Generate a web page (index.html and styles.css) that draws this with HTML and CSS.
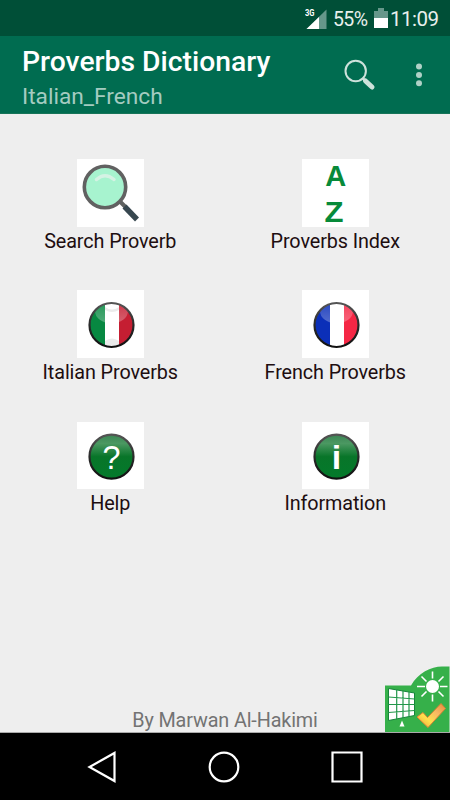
FILE: index.html
```
<!DOCTYPE html>
<html lang="en">
<head>
<meta charset="utf-8">
<title>Proverbs Dictionary</title>
<link rel="stylesheet" href="styles.css">
</head>
<body>
<div class="screen">
  <div class="status">
    <svg class="signal" width="24" height="24" viewBox="0 0 24 24">
      <path d="M21.500 1.500V21H1.500z" fill="#66978a"/>
      <path d="M14 9V21H1.500z" fill="#fff"/>
      <text x="0" y="7.700" class="net" textLength="9.500" lengthAdjust="spacingAndGlyphs">3G</text>
    </svg>
    <span class="percent">55%</span>
    <svg class="battery" width="14" height="20" viewBox="0 0 14 20">
      <path d="M4 0h6v3h4v7H0V3h4z" fill="#66978a"/>
      <path d="M0 10h14v10H0z" fill="#fff"/>
    </svg>
    <span class="clock">11:09</span>
  </div>
  <header class="bar">
    <div class="titles">
      <h1 class="title">Proverbs Dictionary</h1>
      <div class="subtitle">Italian_French</div>
    </div>
    <svg class="find" width="32" height="32" viewBox="0 0 32 32">
      <circle cx="11.700" cy="12" r="10.200" fill="none" stroke="#cde2db" stroke-width="2"/>
      <path d="M18.500 19l3 3" stroke="#cde2db" stroke-width="2.500"/>
      <path d="M21.500 22l6.500 6" stroke="#cde2db" stroke-width="5" stroke-linecap="round"/>
    </svg>
    <svg class="more" width="6" height="24" viewBox="0 0 6 24">
      <g fill="#b0d1c7"><circle cx="3" cy="3.500" r="3"/><circle cx="3" cy="12" r="3"/><circle cx="3" cy="20.300" r="3"/></g>
    </svg>
  </header>
  <main class="content">
    <div class="grid">
      <div class="cell">
        <svg class="tile" viewBox="0 0 67.500 67.500">
          <path d="M41.500 41l7 7" stroke="#606261" stroke-width="4"/>
          <path d="M47.500 47.500l12.500 13" stroke="#37474f" stroke-width="5.500"/>
          <circle cx="28" cy="28" r="20.700" fill="#a7f3cf" stroke="#616161" stroke-width="3.600"/>
          <path d="M19.500 20.500Q28 13 37 20.500" fill="none" stroke="#d5f2e4" stroke-width="3.500" stroke-linecap="round"/>
        </svg>
        <span class="label">Search Proverb</span>
      </div>
      <div class="cell">
        <svg class="tile" viewBox="0 0 67.500 67.500">
          <g class="az"><text x="33.700" y="27" textLength="21" lengthAdjust="spacingAndGlyphs">A</text><text x="32" y="62.700" textLength="19" lengthAdjust="spacingAndGlyphs">Z</text></g>
        </svg>
        <span class="label">Proverbs Index</span>
      </div>
      <div class="cell">
        <svg class="tile" viewBox="0 0 67.500 67.500">
          <defs>
            <clipPath id="disc"><circle cx="34.500" cy="35" r="21.700"/></clipPath>
            <linearGradient id="gloss" x1="0" y1="0" x2="0" y2="1"><stop offset="0" stop-color="#fff" stop-opacity=".08"/><stop offset="1" stop-color="#fff" stop-opacity=".3"/></linearGradient>
            <linearGradient id="rim" x1="0" y1="0" x2="0" y2="1"><stop offset="0" stop-color="#555"/><stop offset=".5" stop-color="#292929"/><stop offset="1" stop-color="#111"/></linearGradient>
            <linearGradient id="green" x1="0" y1="0" x2="0" y2="1"><stop offset="0" stop-color="#3c8554"/><stop offset=".2" stop-color="#4b9862"/><stop offset=".5" stop-color="#087529"/><stop offset="1" stop-color="#037a2b"/></linearGradient>
          </defs>
          <g clip-path="url(#disc)">
            <path d="M10 10h18v50H10z" fill="#078841"/><path d="M28 10h14v50H28z" fill="#fff"/><path d="M42 10h18v50H42z" fill="#c51e32"/>
            <ellipse cx="34.500" cy="21" rx="16.500" ry="12.500" fill="url(#gloss)"/>
            <path d="M28 17q7 5 14 0v3q-7 4-14 0M28 51q7-5 14 0v5H28z" fill="#ddd" opacity=".6"/>
          </g>
          <circle cx="34.500" cy="35" r="22" fill="none" stroke="url(#rim)" stroke-width="2.200"/>
        </svg>
        <span class="label">Italian Proverbs</span>
      </div>
      <div class="cell">
        <svg class="tile" viewBox="0 0 67.500 67.500">
          <g clip-path="url(#disc)">
            <path d="M10 10h18v50H10z" fill="#0b2fb8"/><path d="M28 10h14v50H28z" fill="#fff"/><path d="M42 10h18v50H42z" fill="#f52745"/>
            <ellipse cx="34.500" cy="21" rx="16.500" ry="12.500" fill="url(#gloss)"/>
          </g>
          <circle cx="34.500" cy="35" r="22" fill="none" stroke="url(#rim)" stroke-width="2.200"/>
        </svg>
        <span class="label">French Proverbs</span>
      </div>
      <div class="cell">
        <svg class="tile" viewBox="0 0 67.500 67.500">
          <circle cx="34.500" cy="34.700" r="22" fill="url(#green)" stroke="url(#rim)" stroke-width="2.200"/>
          <text x="34.500" y="47" class="mark" textLength="18" lengthAdjust="spacingAndGlyphs">?</text>
        </svg>
        <span class="label">Help</span>
      </div>
      <div class="cell">
        <svg class="tile" viewBox="0 0 67.500 67.500">
          <circle cx="34.500" cy="34.700" r="22" fill="url(#green)" stroke="url(#rim)" stroke-width="2.200"/>
          <text x="34.500" y="47" class="mark bold">i</text>
        </svg>
        <span class="label">Information</span>
      </div>
    </div>
    <div class="author">By Marwan Al-Hakimi</div>
    <svg class="badge" width="65" height="66" viewBox="0 0 65 66">
      <defs><linearGradient id="tick" x1="0" y1="1" x2="1" y2="0"><stop offset="0" stop-color="#ed9a38"/><stop offset=".35" stop-color="#ffe04c"/><stop offset=".65" stop-color="#f8b964"/><stop offset="1" stop-color="#e88a3a"/></linearGradient></defs>
      <path d="M0 19.500h26C33 7 46 .5 57 .5H64.500V66H0z" fill="#36b04a"/>
      <path d="M3.500 22.500L29.500 27V49.500L3.500 54.500z" fill="#fff" stroke="#16843a" stroke-width="1"/>
      <path d="M11.700 24v29M18 25v27M24 26v24.500M3.500 31l26 2M3.500 38.500h26M3.500 46.500l26-2" fill="none" stroke="#23974a" stroke-width="1.200"/>
      <path d="M17 54.500l2.500 6h-5z" fill="#fff"/>
      <circle cx="47.500" cy="20.500" r="6.500" fill="#fff"/>
      <path d="M47.500 5.500v7M47.500 28.500v7M32 20.500h8M55 20.500h7.500M36.500 10.500l5 5M53.500 25.500l5 5M58.500 10.500l-5 5M41.500 25.500l-5 5" stroke="#fff" stroke-width="1.600"/>
      <path d="M32 51l6-4.500 4.500 5L56 37.500l4.500 5L43 61.500z" fill="url(#tick)" stroke="#d98236" stroke-width="1"/>
    </svg>
  </main>
  <nav class="nav">
    <svg width="30" height="32" viewBox="0 0 30 32"><path d="M27.500 2v28L2.500 16z"/></svg>
    <svg width="32" height="32" viewBox="0 0 32 32"><circle cx="16" cy="16" r="14.300"/></svg>
    <svg width="32" height="32" viewBox="0 0 32 32"><path d="M1.500 1.500h29v29h-29z"/></svg>
  </nav>
</div>
</body>
</html>
```
FILE: styles.css
```
* { box-sizing: border-box; }
body { margin: 0; font-family: Roboto, sans-serif; }
svg { display: block; flex: none; }
.screen {
  width: 450px;
  height: 800px;
  display: flex;
  flex-direction: column;
  overflow: hidden;
}
.status {
  height: 36px;
  background: #004f37;
  display: flex;
  align-items: center;
  color: #e8f0ed;
  padding-left: 305px;
  white-space: nowrap;
}
.signal { margin-top: 4px; }
.net { font: bold 9px Roboto, sans-serif; fill: #fff; }
.percent { font-size: 19.500px; letter-spacing: -.6px; width: 37px; margin-left: 4px; margin-top: 2px; }
.battery { margin-left: 4px; margin-top: -1px; }
.clock { font-size: 20.500px; letter-spacing: -.5px; margin-left: 2px; margin-top: 1px; }
.bar {
  height: 78px;
  background: #006c50;
  border-bottom: 1px solid #167458;
  display: flex;
  align-items: flex-start;
  padding-left: 22px;
}
.titles { width: 322px; padding-top: 8px; }
.title {
  margin: 0;
  font-size: 28.300px;
  font-weight: 500;
  line-height: 36px;
  color: #fff;
}
.subtitle { font-size: 22.700px; line-height: 34px; color: #a4cbc0; }
.find { margin-top: 23px; }
.more { margin: 27px 0 0 40px; }
.content {
  height: 619px;
  background: #eee;
  border-bottom: 1px solid #aaa;
  padding-top: 45px;
  position: relative;
}
.grid {
  display: grid;
  grid-template-columns: 225px 225px;
  grid-auto-rows: 131.250px;
}
.cell {
  display: flex;
  flex-direction: column;
  align-items: center;
  padding-right: 4.500px;
}
.tile { width: 67.500px; height: 67.500px; background: #fff; }
.label {
  font-size: 19.800px;
  letter-spacing: -.1px;
  line-height: 30px;
  color: #200d10;
}
.az {
  font: bold 30px "Liberation Sans", sans-serif;
  fill: #078a39;
  text-anchor: middle;
}
.mark {
  font: 34px "Liberation Sans", sans-serif;
  fill: #fff;
  text-anchor: middle;
}
.bold { font-weight: bold; }
.author {
  font-size: 19.800px;
  letter-spacing: -.13px;
  line-height: 28px;
  color: #737373;
  text-align: center;
  margin-top: 154px;
}
.badge { position: absolute; right: 0; bottom: 0; }
.nav {
  height: 67px;
  background: #000;
  display: flex;
  justify-content: space-between;
  align-items: center;
  padding: 0 87px;
}
.nav path, .nav circle { fill: none; stroke: #fff; stroke-width: 2.200; }
```
